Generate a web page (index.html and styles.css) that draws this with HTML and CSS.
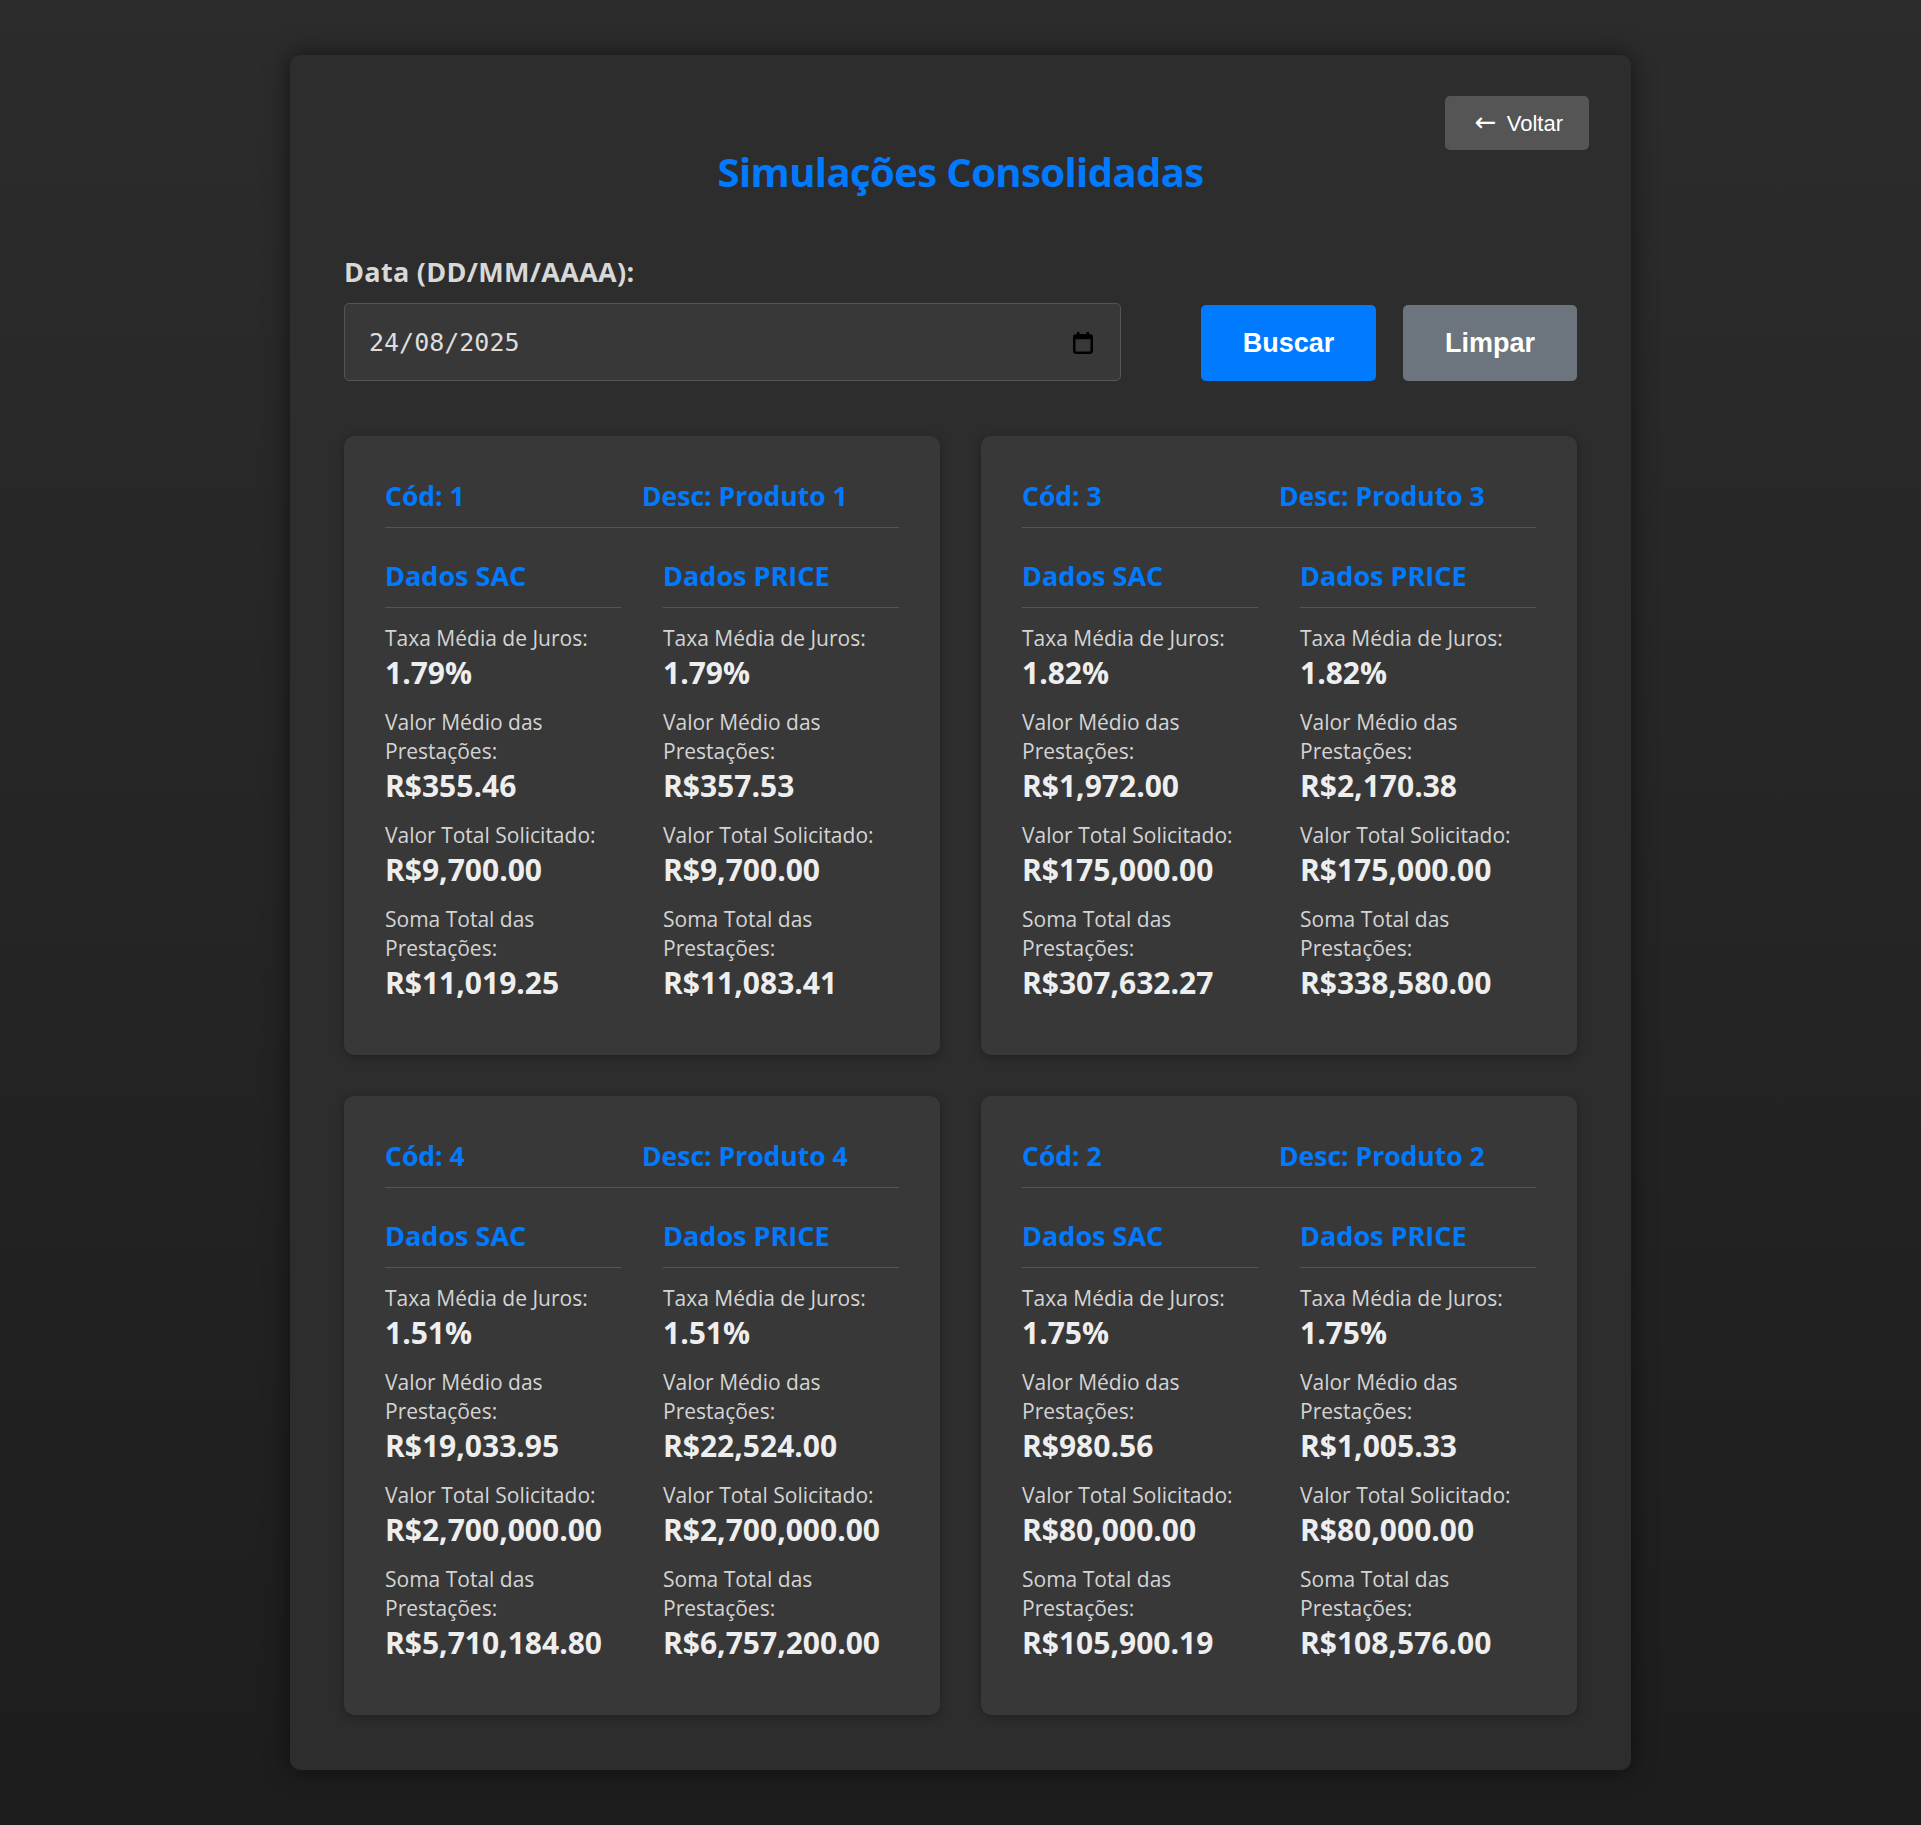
FILE: index.html
```html
<!DOCTYPE html>
<html lang="pt-BR">
<head>
<meta charset="utf-8">
<title>Simulações Consolidadas</title>
<link rel="stylesheet" href="styles.css">
</head>
<body>
<div class="container">
  <button class="btn-back"><span class="arrow">←</span> Voltar</button>
  <h1 class="title">Simulações Consolidadas</h1>
  <label class="date-label">Data (DD/MM/AAAA):</label>
  <div class="form-row">
    <div class="date-input">
      <span class="date-value">24/08/2025</span>
      <svg class="cal-icon" width="20" height="23" viewBox="0 0 20 23"><rect x="1.25" y="4.25" width="17.5" height="17.5" rx="2" fill="none" stroke="#000" stroke-width="2.5"/><rect x="1.25" y="4.25" width="17.5" height="4" fill="#000"/><rect x="4" y="1" width="2.5" height="5" fill="#000"/><rect x="13.5" y="1" width="2.5" height="5" fill="#000"/></svg>
    </div>
    <button class="btn btn-primary">Buscar</button>
    <button class="btn btn-secondary">Limpar</button>
  </div>

  <div class="cards">
    <div class="card">
      <div class="card-head"><h2>Cód: 1</h2><h2>Desc: Produto 1</h2></div>
      <div class="card-body">
        <div class="col">
          <h3>Dados SAC</h3>
          <div class="item"><p class="lbl">Taxa Média de Juros:</p><p class="val">1.79%</p></div>
          <div class="item"><p class="lbl">Valor Médio das Prestações:</p><p class="val">R$355.46</p></div>
          <div class="item"><p class="lbl">Valor Total Solicitado:</p><p class="val">R$9,700.00</p></div>
          <div class="item"><p class="lbl">Soma Total das Prestações:</p><p class="val">R$11,019.25</p></div>
        </div>
        <div class="col">
          <h3>Dados PRICE</h3>
          <div class="item"><p class="lbl">Taxa Média de Juros:</p><p class="val">1.79%</p></div>
          <div class="item"><p class="lbl">Valor Médio das Prestações:</p><p class="val">R$357.53</p></div>
          <div class="item"><p class="lbl">Valor Total Solicitado:</p><p class="val">R$9,700.00</p></div>
          <div class="item"><p class="lbl">Soma Total das Prestações:</p><p class="val">R$11,083.41</p></div>
        </div>
      </div>
    </div>

    <div class="card">
      <div class="card-head"><h2>Cód: 3</h2><h2>Desc: Produto 3</h2></div>
      <div class="card-body">
        <div class="col">
          <h3>Dados SAC</h3>
          <div class="item"><p class="lbl">Taxa Média de Juros:</p><p class="val">1.82%</p></div>
          <div class="item"><p class="lbl">Valor Médio das Prestações:</p><p class="val">R$1,972.00</p></div>
          <div class="item"><p class="lbl">Valor Total Solicitado:</p><p class="val">R$175,000.00</p></div>
          <div class="item"><p class="lbl">Soma Total das Prestações:</p><p class="val">R$307,632.27</p></div>
        </div>
        <div class="col">
          <h3>Dados PRICE</h3>
          <div class="item"><p class="lbl">Taxa Média de Juros:</p><p class="val">1.82%</p></div>
          <div class="item"><p class="lbl">Valor Médio das Prestações:</p><p class="val">R$2,170.38</p></div>
          <div class="item"><p class="lbl">Valor Total Solicitado:</p><p class="val">R$175,000.00</p></div>
          <div class="item"><p class="lbl">Soma Total das Prestações:</p><p class="val">R$338,580.00</p></div>
        </div>
      </div>
    </div>

    <div class="card">
      <div class="card-head"><h2>Cód: 4</h2><h2>Desc: Produto 4</h2></div>
      <div class="card-body">
        <div class="col">
          <h3>Dados SAC</h3>
          <div class="item"><p class="lbl">Taxa Média de Juros:</p><p class="val">1.51%</p></div>
          <div class="item"><p class="lbl">Valor Médio das Prestações:</p><p class="val">R$19,033.95</p></div>
          <div class="item"><p class="lbl">Valor Total Solicitado:</p><p class="val">R$2,700,000.00</p></div>
          <div class="item"><p class="lbl">Soma Total das Prestações:</p><p class="val">R$5,710,184.80</p></div>
        </div>
        <div class="col">
          <h3>Dados PRICE</h3>
          <div class="item"><p class="lbl">Taxa Média de Juros:</p><p class="val">1.51%</p></div>
          <div class="item"><p class="lbl">Valor Médio das Prestações:</p><p class="val">R$22,524.00</p></div>
          <div class="item"><p class="lbl">Valor Total Solicitado:</p><p class="val">R$2,700,000.00</p></div>
          <div class="item"><p class="lbl">Soma Total das Prestações:</p><p class="val">R$6,757,200.00</p></div>
        </div>
      </div>
    </div>

    <div class="card">
      <div class="card-head"><h2>Cód: 2</h2><h2>Desc: Produto 2</h2></div>
      <div class="card-body">
        <div class="col">
          <h3>Dados SAC</h3>
          <div class="item"><p class="lbl">Taxa Média de Juros:</p><p class="val">1.75%</p></div>
          <div class="item"><p class="lbl">Valor Médio das Prestações:</p><p class="val">R$980.56</p></div>
          <div class="item"><p class="lbl">Valor Total Solicitado:</p><p class="val">R$80,000.00</p></div>
          <div class="item"><p class="lbl">Soma Total das Prestações:</p><p class="val">R$105,900.19</p></div>
        </div>
        <div class="col">
          <h3>Dados PRICE</h3>
          <div class="item"><p class="lbl">Taxa Média de Juros:</p><p class="val">1.75%</p></div>
          <div class="item"><p class="lbl">Valor Médio das Prestações:</p><p class="val">R$1,005.33</p></div>
          <div class="item"><p class="lbl">Valor Total Solicitado:</p><p class="val">R$80,000.00</p></div>
          <div class="item"><p class="lbl">Soma Total das Prestações:</p><p class="val">R$108,576.00</p></div>
        </div>
      </div>
    </div>
  </div>
</div>
</body>
</html>
```
FILE: styles.css
```css
* { box-sizing: border-box; }

html, body { margin: 0; }

body {
  min-height: 1825px;
  padding: 55px 0;
  background: linear-gradient(180deg, #2c2c2c 0%, #1d1d1d 100%);
  font-family: "Open Sans", "Noto Sans", sans-serif;
  color: #ddd;
}

.container {
  position: relative;
  width: 1341px;
  margin: 0 auto;
  padding: 54px 54px 55px;
  background: #2d2d2d;
  border-radius: 10px;
  box-shadow: 0 0 24px rgba(0, 0, 0, 0.55);
}

.btn-back {
  position: absolute;
  top: 41px;
  right: 42px;
  height: 54px;
  padding: 0 26px 0 30px;
  border: none;
  border-radius: 5px;
  background: #555;
  color: #fff;
  font-family: "Liberation Sans", Arial, sans-serif;
  font-size: 22px;
}

.arrow {
  font-family: "DejaVu Sans", sans-serif;
  font-size: 26px;
  line-height: 1;
  margin-right: 4px;
}

.title {
  margin: 34px 0 54px;
  text-align: center;
  font-size: 40px;
  letter-spacing: -0.6px;
  line-height: 58px;
  font-weight: 700;
  color: #007bff;
}

.date-label {
  display: block;
  margin-bottom: 14px;
  font-size: 27px;
  letter-spacing: 0.3px;
  line-height: 34px;
  font-weight: 700;
  color: #d8d8d8;
}

.form-row {
  display: flex;
  align-items: flex-end;
  gap: 27px;
}

.date-input {
  flex: 1;
  height: 78px;
  margin-right: 53px;
  display: flex;
  align-items: center;
  justify-content: space-between;
  padding: 0 27px 0 24px;
  background: #383838;
  border: 1px solid #555;
  border-radius: 5px;
}

.date-value {
  font-family: "DejaVu Sans Mono", "Liberation Mono", monospace;
  font-size: 25px;
  color: #ddd;
}

.cal-icon { display: block; }

.btn {
  height: 76px;
  border: none;
  border-radius: 5px;
  color: #fff;
  font-family: "Liberation Sans", Arial, sans-serif;
  font-size: 27px;
  font-weight: 700;
}

.btn-primary { width: 175px; background: #007bff; }
.btn-secondary { width: 174px; background: #6c757d; }

.cards {
  margin-top: 55px;
  display: grid;
  grid-template-columns: 1fr 1fr;
  gap: 41px 41px;
}

.card {
  background: #383838;
  border-radius: 10px;
  padding: 41px 41px 37px;
  box-shadow: 0 2px 10px rgba(0, 0, 0, 0.3);
}

.card-head {
  display: grid;
  grid-template-columns: 1fr 1fr;
  padding-bottom: 12px;
  border-bottom: 1px solid #555;
}

.card-head h2 {
  margin: 0;
  font-size: 26.5px;
  line-height: 38px;
  font-weight: 700;
  color: #007bff;
}

.card-body {
  display: grid;
  grid-template-columns: 1fr 1fr;
  gap: 42px;
  margin-top: 29px;
}

.col h3 {
  margin: 0 0 16px;
  padding-bottom: 12px;
  border-bottom: 1px solid #555;
  font-size: 27px;
  line-height: 38px;
  font-weight: 700;
  color: #007bff;
}

.item { margin-bottom: 15px; }

.lbl {
  margin: 0;
  font-size: 21px;
  line-height: 29px;
  color: #d4d4d4;
}

.val {
  margin: 0;
  font-size: 30px;
  line-height: 40px;
  font-weight: 700;
  color: #eee;
}
```
